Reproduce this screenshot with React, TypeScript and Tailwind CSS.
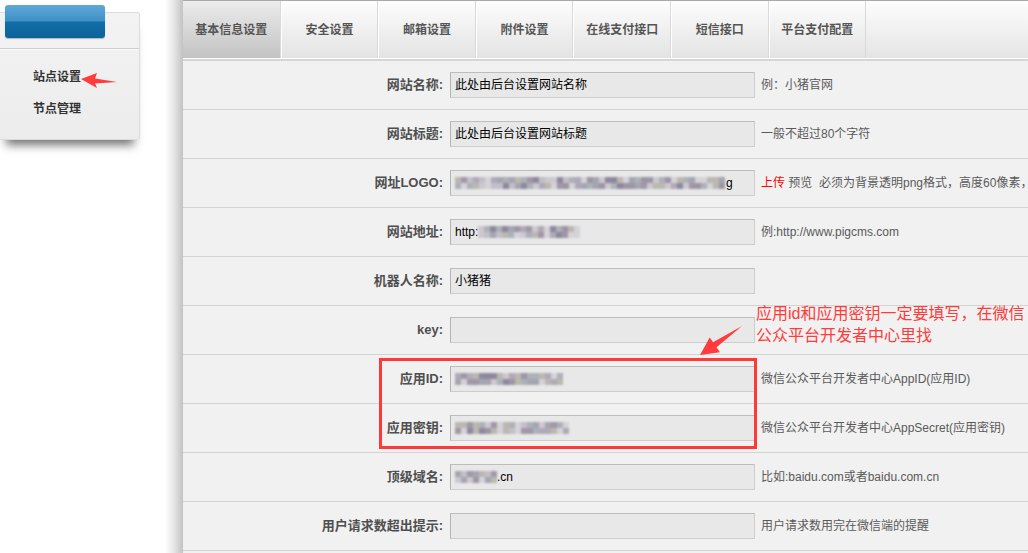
import React from "react";

const FONT = { fontFamily: '"Liberation Sans", "Noto Sans CJK SC", sans-serif' };

function Mosaic({ width, seed }: { width: number; seed: number }) {
  const cols = Math.floor(width / 6);
  const palette = ["#8f8799", "#a59fb0", "#bdb8c4", "#9a9aa8", "#c9c3cc", "#7f7890", "#b3b0a8", "#d2cfd6", "#a3a8b0", "#958a9c"];
  let s = seed;
  const rnd = () => {
    s = (s * 9301 + 49297) % 233280;
    return s / 233280;
  };
  const cells: string[][] = [[], []];
  for (let r = 0; r < 2; r++) for (let c = 0; c < cols; c++) cells[r].push(palette[Math.floor(rnd() * palette.length)]);
  return (
    <span className="inline-flex flex-col blur-[1px] opacity-85 align-middle rounded-[3px]">
      {cells.map((row, i) => (
        <span key={i} className="flex">
          {row.map((c, j) => (
            <span key={j} className="w-[6px] h-[6px]" style={{ backgroundColor: c }} />
          ))}
        </span>
      ))}
    </span>
  );
}

type Row = { label: string; value?: React.ReactNode; hint?: React.ReactNode; note?: boolean };

const rows: Row[] = [
  { label: "网站名称", value: <span>此处由后台设置网站名称</span>, hint: "例：小猪官网" },
  { label: "网站标题", value: <span>此处由后台设置网站标题</span>, hint: "一般不超过80个字符" },
  {
    label: "网址LOGO",
    value: (
      <span className="flex items-center">
        <Mosaic width={270} seed={11} />
        <span className="ml-[1px]">g</span>
      </span>
    ),
    hint: (
      <span>
        <span className="text-[#ff0000]">上传</span> 预览&nbsp; 必须为背景透明png格式，高度60像素，
      </span>
    ),
  },
  {
    label: "网站地址",
    value: (
      <span className="flex items-center">
        <span>http:</span>
        <Mosaic width={102} seed={5} />
      </span>
    ),
    hint: "例:http://www.pigcms.com",
  },
  { label: "机器人名称", value: <span>小猪猪</span> },
  { label: "key", note: true },
  { label: "应用ID", value: <Mosaic width={108} seed={23} />, hint: "微信公众平台开发者中心AppID(应用ID)" },
  { label: "应用密钥", value: <Mosaic width={118} seed={37} />, hint: "微信公众平台开发者中心AppSecret(应用密钥)" },
  {
    label: "顶级域名",
    value: (
      <span className="flex items-center">
        <Mosaic width={42} seed={3} />
        <span>.cn</span>
      </span>
    ),
    hint: "比如:baidu.com或者baidu.com.cn",
  },
  { label: "用户请求数超出提示", hint: "用户请求数用完在微信端的提醒" },
  { label: "", hint: "" },
];

const tabs = ["基本信息设置", "安全设置", "邮箱设置", "附件设置", "在线支付接口", "短信接口", "平台支付配置"];

export default function App() {
  return (
    <div className="w-[1028px] h-[553px] overflow-hidden flex bg-white relative" style={FONT}>
      {/* Sidebar */}
      <div className="w-[183px] shrink-0 flex bg-white">
        <div className="w-[165px] pt-[12px]">
          <div className="w-[140px] h-[128px] bg-gradient-to-b from-[#f3f3f3] to-[#ececec] border border-l-0 border-[#dcdcdc] rounded-r-[3px] shadow-[0_11px_9px_-6px_rgba(0,0,0,0.55)]">
            <div className="ml-[5px] -mt-[8px] w-[100px] h-[33px] rounded-[3px] shadow-[0_1px_1px_rgba(0,0,0,0.25)] bg-[linear-gradient(#5fa9d7,#3f92c6_48%,#126ea6_52%,#0b6399)]" />
            <div className="mt-[10px] border-b border-[#cfcfcf] shadow-[0_1px_0_#fafafa]" />
            <div className="pl-[33px] pt-[21px] text-[12px] font-bold text-[#333] leading-[14px]">站点设置</div>
            <div className="pl-[33px] pt-[18px] text-[12px] font-bold text-[#333] leading-[14px]">节点管理</div>
          </div>
        </div>
        <div className="w-[18px] bg-gradient-to-r from-white via-[#e6e6e6] to-[#c2c2c2]" />
      </div>

      {/* Main */}
      <div className="flex-1 bg-[#f1f1f1] flex flex-col">
        <div className="h-[61px] shrink-0 border-t border-[#a9a9a9] flex flex-col bg-gradient-to-b from-[#fdfdfd] to-[#e3e3e3]">
          <div className="h-[57px] flex">
            {tabs.map((t, i) => (
              <div
                key={t}
                className={
                  "w-[97.6px] shrink-0 flex items-center justify-center text-[12px] font-bold text-[#555] border-r border-[#d9d9d9] " +
                  (i === 0
                    ? "bg-gradient-to-b from-[#ececec] to-[#c3c3c3]"
                    : "border-l border-l-white bg-gradient-to-b from-[#fdfdfd] to-[#e3e3e3]")
                }
              >
                {t}
              </div>
            ))}
          </div>
          <div className="h-[1px] bg-white" />
          <div className="h-[2px] bg-[#d6d6d6]" />
        </div>

        {rows.map((r, i) => (
          <div key={i} className="h-[49px] shrink-0 flex items-center border-b border-[#d3d3d3]">
            <div className="w-[267px] shrink-0 pr-[7px] text-right text-[13px] font-bold text-[#4f4f4f]">
              {r.label ? r.label + ":" : ""}
            </div>
            {r.label ? (
              <div className="w-[305px] h-[26px] shrink-0 flex items-center pl-[4px] bg-[#e8e8e8] border border-[#cdcdcd] border-l-[#b3b3b3] border-t-[#bdbdbd] text-[12px] text-black whitespace-nowrap overflow-hidden">
                {r.value}
              </div>
            ) : null}
            {r.note ? (
              <div className="self-start -mt-[3px] pl-[1px] text-[16px] leading-[22px] text-[#ff3b3b] whitespace-nowrap">
                应用id和应用密钥一定要填写，在微信
                <br />
                公众平台开发者中心里找
              </div>
            ) : (
              <div className="pl-[6px] text-[12px] text-[#5a5a5a] whitespace-nowrap">{r.hint}</div>
            )}
          </div>
        ))}
      </div>

      {/* Annotations */}
      <div className="absolute left-[379px] top-[358px] w-[378px] h-[91px] border-[3px] border-[#ff3838]" />
      <svg className="absolute left-0 top-0" width="1028" height="553" viewBox="0 0 1028 553">
        <polygon points="81,79 97,73 95,78.5 117,82 95,83.5 97,88" fill="#ff3b3b" />
        <polygon points="700,355 709.7,337.4 713.1,342.3 742,326 716.5,347.3 719.9,352.2" fill="#ff3b3b" />
      </svg>
    </div>
  );
}
